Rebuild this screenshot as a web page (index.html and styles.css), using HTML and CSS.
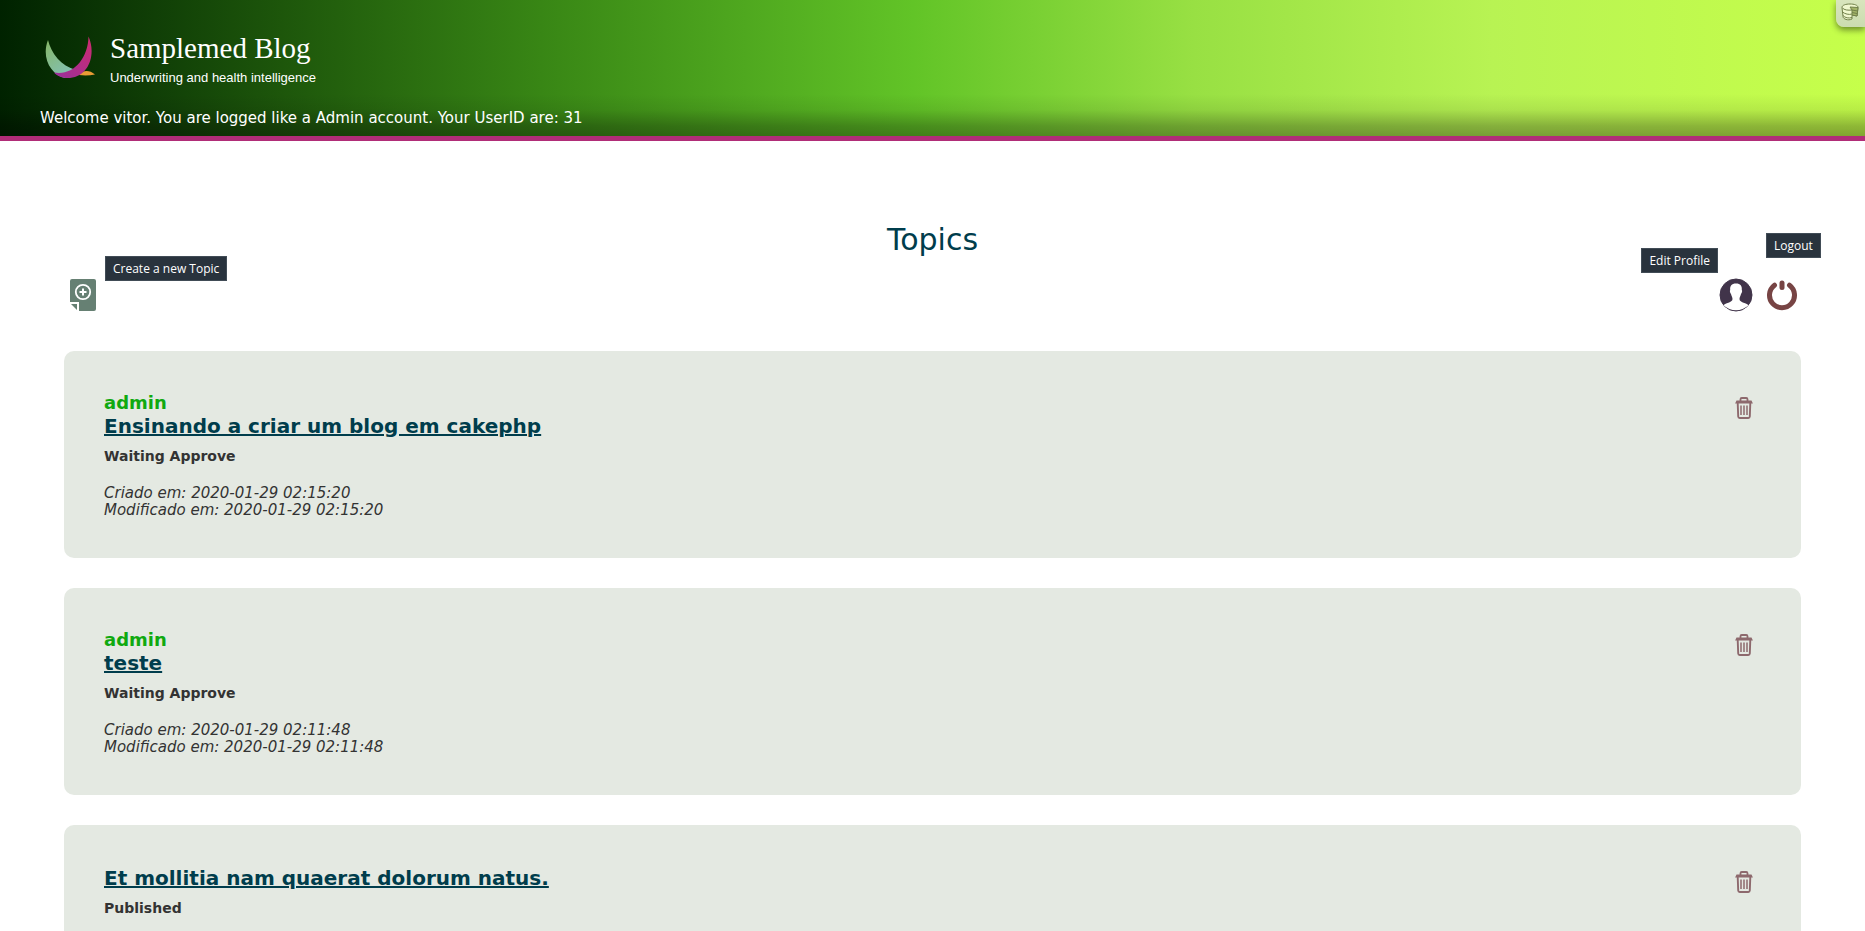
FILE: index.html
```html
<!DOCTYPE html>
<html lang="en">
<head>
<meta charset="utf-8">
<title>Samplemed Blog</title>
<link rel="stylesheet" href="styles.css">
</head>
<body>
<svg class="sprite" aria-hidden="true">
  <symbol id="trash" viewBox="0 0 18 22">
    <path d="M5.500 4V2.300Q5.500 1 6.800 1H11.200Q12.500 1 12.500 2.300V4" fill="none" stroke="currentColor" stroke-width="1.800"/>
    <path d="M1.500 3.600H16.500L17.900 6.400H.1Z" fill="currentColor"/>
    <path d="M2.700 6L3.200 19.500Q3.300 21 4.700 21H13.300Q14.700 21 14.800 19.500L15.300 6" fill="none" stroke="currentColor" stroke-width="1.900"/>
    <path d="M6 8.500V18M9 8.500V18M12 8.500V18" fill="none" stroke="currentColor" stroke-width="1.500"/>
  </symbol>
</svg>
<header class="header">
  <div class="brand">
    <svg class="brand-logo" viewBox="0 0 50 50" aria-hidden="true">
      <defs>
        <linearGradient id="leaf" x1="0" y1="0" x2=".6" y2="1"><stop offset="0" stop-color="#86b766"/><stop offset="1" stop-color="#83c0b4"/></linearGradient>
        <linearGradient id="petal" x1="0" y1="1" x2=".8" y2="0"><stop offset="0" stop-color="#9a2f9c"/><stop offset="1" stop-color="#c92c72"/></linearGradient>
      </defs>
      <path d="M34 43C38 38 44 37.500 50 42.500Q42 44 34 43Z" fill="#e99b35"/>
      <path d="M3 8C6 21 16 34 31 38L20 46C6 43-4 26 3 8Z" fill="url(#leaf)"/>
      <path d="M43.500 4.500C51 21 45 44 25 46C18 46.500 12 44 9 40.500C28 44 43 27 43.500 4.500Z" fill="url(#petal)"/>
    </svg>
    <div>
      <h1 class="brand-name">Samplemed Blog</h1>
      <p class="brand-tagline">Underwriting and health intelligence</p>
    </div>
  </div>
  <p class="welcome">Welcome vitor. You are logged like a Admin account. Your UserID are: 31</p>
  <button class="debug" type="button" aria-label="Debug toolbar">
    <svg viewBox="0 0 18 18" width="18" height="18" aria-hidden="true" fill="#f0f8cf" stroke="#71804a" stroke-width="1" stroke-linejoin="round">
      <path d="M1 4.500C1 2 5 1 9 1S17 2 17 4.500L16 13L11 12V16C7 18 2 16 2 13.500Z"/>
      <path d="M1.500 5C3 7 7 7.500 11 7M1.500 9C4 11 8 12 11 11M2 12.500C4 15 8 15.500 11 14.500" fill="none"/>
      <path d="M9 4L17 4.500L16 13L11 12V7Z" fill="#a3b369"/>
      <path d="M11 7L16.500 8M11 9.500L16 10.500" fill="none"/>
    </svg>
  </button>
</header>
<main class="page">
  <h2 class="page-title">Topics</h2>
  <nav class="actions" aria-label="Topic actions">
    <a class="action action-create" href="#create" aria-labelledby="tip-create">
      <svg viewBox="0 0 26 32" width="26" height="32" aria-hidden="true">
        <path d="M2 0H24Q26 0 26 2V30Q26 32 24 32H9V23H0V2Q0 0 2 0Z" fill="#668073"/>
        <path d="M1 25H7V31Z" fill="#668073"/>
        <circle cx="13" cy="13" r="7.200" fill="none" stroke="#fff" stroke-width="1.800"/>
        <path d="M13 9.500V16.500M9.500 13H16.500" stroke="#fff" stroke-width="2"/>
      </svg>
      <span class="tip" id="tip-create">Create a new Topic</span>
    </a>
    <a class="action action-profile" href="#profile" aria-labelledby="tip-profile">
      <svg viewBox="0 0 34 34" width="34" height="34" aria-hidden="true">
        <circle cx="17" cy="17" r="16" fill="#41344a" stroke="#41344a"/>
        <path d="M17 5.500C12.500 5.500 10.800 8 11.200 12C10.500 12.500 11 15 12 16C12.300 18 13.500 19 13.500 21C13.500 24.500 7.500 24.500 4.500 27.200Q10 32.300 17 32.300T29.500 27.200C26.500 24.500 20.500 24.500 20.500 21C20.500 19 21.700 18 22 16C23 15 23.500 12.500 22.800 12C23.200 8 21.500 5.500 17 5.500Z" fill="#fff"/>
      </svg>
      <span class="tip" id="tip-profile">Edit Profile</span>
    </a>
    <a class="action action-logout" href="#logout" aria-labelledby="tip-logout">
      <svg viewBox="0 0 32 32" width="32" height="32" aria-hidden="true" fill="none" stroke="#774444" stroke-width="5" stroke-linecap="round">
        <path d="M8.500 6.200A12.500 12.500 0 1 0 23.500 6.200"/>
        <path d="M16 4V8.500"/>
      </svg>
      <span class="tip" id="tip-logout">Logout</span>
    </a>
  </nav>
  <section class="topics">
    <article class="topic">
      <div>
        <p class="author">admin</p>
        <h3 class="topic-title"><a href="#topic-1">Ensinando a criar um blog em cakephp</a></h3>
        <p class="status">Waiting Approve</p>
        <p class="dates">Criado em: 2020-01-29 02:15:20<br>Modificado em: 2020-01-29 02:15:20</p>
      </div>
      <button class="delete" type="button" aria-label="Delete topic"><svg width="18" height="22"><use href="#trash"/></svg></button>
    </article>
    <article class="topic">
      <div>
        <p class="author">admin</p>
        <h3 class="topic-title"><a href="#topic-2">teste</a></h3>
        <p class="status">Waiting Approve</p>
        <p class="dates">Criado em: 2020-01-29 02:11:48<br>Modificado em: 2020-01-29 02:11:48</p>
      </div>
      <button class="delete" type="button" aria-label="Delete topic"><svg width="18" height="22"><use href="#trash"/></svg></button>
    </article>
    <article class="topic">
      <div>
        <h3 class="topic-title"><a href="#topic-3">Et mollitia nam quaerat dolorum natus.</a></h3>
        <p class="status">Published</p>
      </div>
      <button class="delete" type="button" aria-label="Delete topic"><svg width="18" height="22"><use href="#trash"/></svg></button>
    </article>
  </section>
</main>
</body>
</html>
```
FILE: styles.css
```css
* {
  box-sizing: border-box;
}

body {
  margin: 0;
  background: #fff;
  color: #333;
  font-family: Verdana, "DejaVu Sans", sans-serif;
  font-size: 14px;
  line-height: 17px;
}

h1,
h2,
h3,
p {
  margin: 0;
}

.sprite {
  display: none;
}

.header {
  position: relative;
  padding: 32px 40px 9px;
  border-bottom: 5px solid #b12d78;
  color: #fff;
  background:
    linear-gradient(to top, rgba(0, 0, 0, 0.35), rgba(0, 0, 0, 0.28) 10px, rgba(0, 0, 0, 0.07) 26px, transparent 42px),
    linear-gradient(to right, #002200 0%, #388615 29%, #62c427 49%, #98e043 64%, #b8f353 80%, #c6ff4a 100%);
}

.brand {
  display: flex;
  gap: 15px;
  padding-left: 5px;
}

.brand-logo {
  width: 50px;
  height: 50px;
}

.brand-name {
  font: 400 29px/33px "Liberation Serif", serif;
}

.brand-tagline {
  font: 400 13px/25px "Liberation Sans", sans-serif;
}

.welcome {
  padding-top: 20px;
  font-size: 15px;
}

.debug {
  position: absolute;
  top: 0;
  right: 0;
  width: 29px;
  height: 27px;
  padding: 0 0 3px 5px;
  border: 0;
  border-bottom-left-radius: 8px;
  background: linear-gradient(#d9e5bd, #cbdcaf);
  box-shadow: 0 3px 6px rgba(0, 0, 0, 0.45);
}

.debug svg,
.action svg,
.delete svg {
  display: block;
}

.page {
  padding: 80px 64px 0;
}

.page-title {
  color: #003d4c;
  font-size: 30px;
  font-weight: 400;
  line-height: 38px;
  text-align: center;
}

.actions {
  display: flex;
  align-items: center;
  gap: 13px;
  padding: 19px 3px 39px 6px;
}

.action {
  position: relative;
}

.action-create {
  margin-right: auto;
}

.tip {
  position: absolute;
  padding: 3px 7px;
  border: 1px solid #414c56;
  background: #29333d;
  color: #fff;
  font: 400 12px/17px "Open Sans", "Noto Sans", sans-serif;
  white-space: nowrap;
}

.action-create .tip {
  left: 35px;
  bottom: 30px;
}

.action-profile .tip {
  right: 35px;
  bottom: 39px;
}

.action-logout .tip {
  left: 0;
  bottom: 53px;
}

.topics {
  display: grid;
  gap: 30px;
}

.topic {
  display: flex;
  justify-content: space-between;
  align-items: flex-start;
  padding: 41px 40px 39px;
  border-radius: 10px;
  background: #e4e9e2;
}

.author {
  color: #10a910;
  font-size: 18px;
  font-weight: 700;
  line-height: 22px;
}

.topic-title {
  font-size: 20px;
  line-height: 24px;
}

.topic-title a {
  color: #003d4c;
  text-decoration-thickness: 2px;
}

.status {
  padding-top: 10px;
  font-weight: 700;
}

.dates {
  padding-top: 20px;
  font-size: 15px;
  font-style: italic;
}

.delete {
  padding: 5px 8px;
  border: 0;
  background: none;
  color: #8d696d;
}
```
